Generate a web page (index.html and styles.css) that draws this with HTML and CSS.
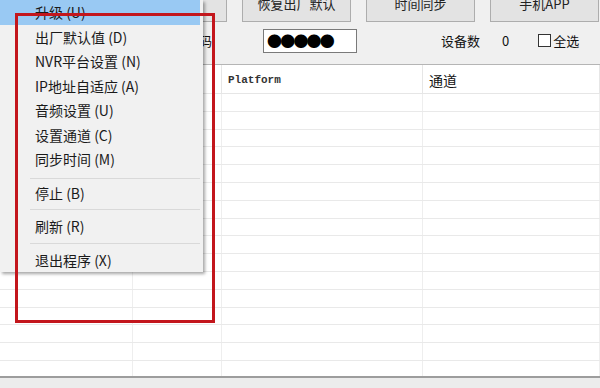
FILE: index.html
```html
<!DOCTYPE html>
<html lang="zh-CN">

<head>
    <meta charset="UTF-8">
    <meta name="viewport" content="width=device-width, initial-scale=1.0">
    <title>设备管理</title>
    <link rel="stylesheet" href="styles.css">
</head>

<body>
    <div class="app">
        <div class="toolbar">
            <button class="btn"></button>
            <button class="btn">恢复出厂默认</button>
            <button class="btn">时间同步</button>
            <button class="btn">手机APP</button>
        </div>
        <div class="options">
            <span class="pwd-label">密码</span>
            <span class="pwd-box">●●●●●</span>
            <span class="count-label">设备数</span>
            <span class="count">0</span>
            <label class="check-all"><span class="box"></span>全选</label>
        </div>
        <div class="list">
            <div class="list-head">
                <div class="cell"></div>
                <div class="cell"></div>
                <div class="cell mono">Platform</div>
                <div class="cell">通道</div>
            </div>
            <div class="list-body">
                <div class="row"><div class="cell"></div><div class="cell"></div><div class="cell"></div><div class="cell"></div></div>
                <div class="row"><div class="cell"></div><div class="cell"></div><div class="cell"></div><div class="cell"></div></div>
                <div class="row"><div class="cell"></div><div class="cell"></div><div class="cell"></div><div class="cell"></div></div>
                <div class="row"><div class="cell"></div><div class="cell"></div><div class="cell"></div><div class="cell"></div></div>
                <div class="row"><div class="cell"></div><div class="cell"></div><div class="cell"></div><div class="cell"></div></div>
                <div class="row"><div class="cell"></div><div class="cell"></div><div class="cell"></div><div class="cell"></div></div>
                <div class="row"><div class="cell"></div><div class="cell"></div><div class="cell"></div><div class="cell"></div></div>
                <div class="row"><div class="cell"></div><div class="cell"></div><div class="cell"></div><div class="cell"></div></div>
                <div class="row"><div class="cell"></div><div class="cell"></div><div class="cell"></div><div class="cell"></div></div>
                <div class="row"><div class="cell"></div><div class="cell"></div><div class="cell"></div><div class="cell"></div></div>
                <div class="row"><div class="cell"></div><div class="cell"></div><div class="cell"></div><div class="cell"></div></div>
                <div class="row"><div class="cell"></div><div class="cell"></div><div class="cell"></div><div class="cell"></div></div>
                <div class="row"><div class="cell"></div><div class="cell"></div><div class="cell"></div><div class="cell"></div></div>
                <div class="row"><div class="cell"></div><div class="cell"></div><div class="cell"></div><div class="cell"></div></div>
                <div class="row"><div class="cell"></div><div class="cell"></div><div class="cell"></div><div class="cell"></div></div>
                <div class="row"><div class="cell"></div><div class="cell"></div><div class="cell"></div><div class="cell"></div></div>
            </div>
        </div>
        <div class="statusbar"></div>
    </div>

    <!-- 右键菜单 -->
    <ul class="menu">
        <li class="menu-item active">升级 (U)</li>
        <li class="menu-item">出厂默认值 (D)</li>
        <li class="menu-item">NVR平台设置 (N)</li>
        <li class="menu-item">IP地址自适应 (A)</li>
        <li class="menu-item">音频设置 (U)</li>
        <li class="menu-item">设置通道 (C)</li>
        <li class="menu-item">同步时间 (M)</li>
        <li class="menu-sep first"></li>
        <li class="menu-item">停止 (B)</li>
        <li class="menu-sep"></li>
        <li class="menu-item">刷新 (R)</li>
        <li class="menu-sep"></li>
        <li class="menu-item">退出程序 (X)</li>
    </ul>

    <!-- 标注框 -->
    <div class="mark"></div>
</body>

</html>
```

FILE: styles.css
```css
* {
    box-sizing: border-box;
}

body {
    margin: 0;
    background: #f0f0f0;
    font-family: "Noto Sans CJK SC", "Noto Sans", sans-serif;
    font-size: 13px;
    color: #111;
    overflow: hidden;
}

.app {
    display: flex;
    flex-direction: column;
    height: 388px;
}

/* 顶部按钮 */
.toolbar {
    display: flex;
    gap: 15px;
    margin-top: -16px;
    padding-left: 118px;
}

.btn {
    width: 109px;
    height: 38px;
    padding: 0;
    font: inherit;
    color: #222;
    background: #e3e3e3;
    border: 1px solid #adadad;
}

/* 密码 / 设备数 */
.options {
    display: flex;
    align-items: center;
    height: 42px;
    padding-bottom: 5px;
}

.pwd-label {
    margin-left: 186px;
}

.pwd-box {
    width: 94px;
    height: 24px;
    margin-left: 51px;
    padding-left: 3px;
    background: #fff;
    border: 1px solid #7a7a7a;
    font-size: 15px;
    line-height: 22px;
    letter-spacing: -1.8px;
    color: #000;
}

.count-label {
    margin-left: 84px;
}

.count {
    margin-left: 22px;
}

.check-all {
    display: flex;
    align-items: center;
    margin-left: 29px;
}

.check-all .box {
    width: 13px;
    height: 13px;
    margin-right: 2px;
    background: #fff;
    border: 1px solid #333;
}

/* 列表 */
.list {
    flex: 1;
    overflow: hidden;
    background: #fff;
    border-top: 1px solid #b5b5b5;
}

.list-head,
.row {
    display: grid;
    grid-template-columns: 133px 89px 201px 1fr;
}

.list-head {
    height: 29px;
    border-bottom: 1px solid #e6e6e6;
    font-size: 14px;
}

.list-head .cell {
    padding: 5px 0 0 6px;
    border-right: 1px solid #e6e6e6;
}

.list-head .mono {
    padding-top: 9px;
    font-family: "Liberation Mono", monospace;
    font-size: 11px;
    font-weight: bold;
    color: #333;
}

.row {
    height: 17.8px;
    border-bottom: 1px solid #e9e9e9;
}

.row .cell {
    border-right: 1px solid #eeeeee;
}

.statusbar {
    height: 12px;
    background: #ececec;
    border-top: 2px solid #9d9d9d;
}

/* 右键菜单 */
.menu {
    position: absolute;
    left: 0;
    top: 0;
    width: 203px;
    margin: 0;
    padding: 0;
    list-style: none;
    background: #f1f1f1;
    box-shadow: 2px 2px 3px rgba(0, 0, 0, .35);
    font-size: 14px;
    color: #1a1a1a;
}

.menu-item {
    width: 200px;
    height: 24.5px;
    padding-left: 35px;
    line-height: 24.5px;
}

.menu-item.active {
    background: #99c9f3;
}

.menu-sep {
    margin: 4px 3px 4px 30px;
    border-top: 1px solid #d9d9d9;
}

.menu-sep.first {
    margin-top: 6px;
    margin-bottom: 2px;
}

/* 红色标注框 */
.mark {
    position: absolute;
    left: 15px;
    top: 13px;
    width: 200px;
    height: 310px;
    border: 3px solid #c3161c;
}
```
